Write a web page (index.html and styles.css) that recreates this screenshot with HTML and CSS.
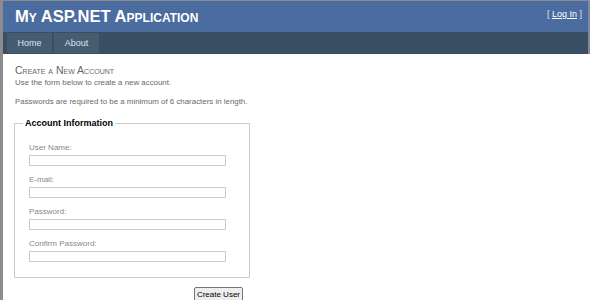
FILE: index.html
```html
<!DOCTYPE html>
<html>
<head>
<meta charset="utf-8">
<link rel="stylesheet" href="styles.css">
</head>
<body>
<div class="page">
  <div class="header">
    <div class="title">My ASP.NET Application</div>
    <div class="login">[ <a href="#">Log In</a> ]</div>
  </div>
  <div class="nav">
    <a class="menu-item" href="#">Home</a>
    <a class="menu-item" href="#">About</a>
  </div>
  <div class="main">
    <h2 class="heading">Create a New Account</h2>
    <p class="intro">Use the form below to create a new account.</p>
    <p class="note">Passwords are required to be a minimum of 6 characters in length.</p>
    <fieldset class="box">
      <legend class="legend">Account Information</legend>
      <div class="field"><label>User Name:</label><input class="text" type="text"></div>
      <div class="field"><label>E-mail:</label><input class="text" type="text"></div>
      <div class="field"><label>Password:</label><input class="text" type="password"></div>
      <div class="field"><label>Confirm Password:</label><input class="text" type="password"></div>
    </fieldset>
    <div class="actions"><button class="btn">Create User</button></div>
  </div>
</div>
</body>
</html>
```
FILE: styles.css
```css
html, body { margin: 0; padding: 0; background: #fff; }
body { font-family: "Liberation Sans", Arial, sans-serif; color: #696969; }
.page {
  border-left: 3px solid #8c8c8c;
  border-top: 1px solid #8c8c8c;
  height: 299px;
  overflow: hidden;
}
.header {
  background: #4b6c9e;
  height: 31px;
  display: flex;
  justify-content: space-between;
  align-items: flex-start;
  border-right: 2px solid #7d8a99;
}
.title {
  font-variant: small-caps;
  font-weight: bold;
  font-size: 16.6px;
  color: #fff;
  margin: 7px 0 0 12px;
  line-height: 18px;
}
.login {
  font-size: 9px;
  color: #dde4ec;
  margin: 8px 6px 0 0;
}
.login a { color: #fff; }
.nav {
  background: #3a4f63;
  height: 22px;
  display: flex;
  padding-left: 4px;
  gap: 2px;
  border-right: 2px solid #7d8a99;
}
.menu-item {
  background: #465c71;
  color: #dde4ec;
  text-decoration: none;
  font-size: 9px;
  width: 45px;
  display: flex;
  align-items: center;
  justify-content: center;
  margin-top: 1px;
  height: 20px;
}
.main { padding: 10px 12px 0 12px; }
.heading {
  font-variant: small-caps;
  font-weight: normal;
  font-size: 10.5px;
  color: #666;
  margin: 0;
  line-height: 13px;
}
.intro, .note {
  font-size: 7.9px;
  margin: 0;
  line-height: 11px;
}
.note { margin-top: 8px; }
.box {
  width: 236px;
  box-sizing: border-box;
  border: 1px solid #ccc;
  margin: 11px 0 0 -1px;
  padding: 14px 14px 15px 14px;
}
.legend {
  font-size: 9px;
  font-weight: bold;
  color: #000;
  padding: 0 2px;
  margin-left: -6px;
}
.field { display: flex; flex-direction: column; margin-top: 8px; }
.field:first-of-type { margin-top: 0; }
.field label { font-size: 8px; color: #888; line-height: 11px; margin-bottom: 2px; }
.text {
  width: 197px;
  height: 11px;
  box-sizing: border-box;
  border: 1px solid #ccc;
  padding: 0;
  margin: 0;
}
.actions { width: 228px; display: flex; justify-content: flex-end; margin-top: 9px; }
.btn {
  font-family: "Liberation Sans", Arial, sans-serif;
  font-size: 8px;
  color: #000;
  background: #eee;
  border: 1px solid #777;
  border-radius: 2px;
  padding: 2px 2px;
  line-height: 10px;
}
```
